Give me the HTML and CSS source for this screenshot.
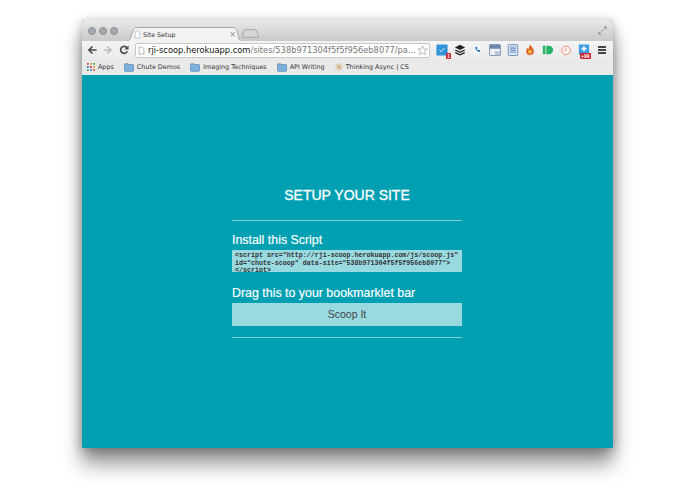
FILE: index.html
```html
<!DOCTYPE html>
<html lang="en">
<head>
<meta charset="utf-8">
<title>Site Setup</title>
<link rel="stylesheet" href="styles.css">
</head>
<body>
<div class="window">
  <div class="titlebar">
    <div class="lights"><i></i><i></i><i></i></div>
    <div class="tab">
      <svg class="tabshape" viewBox="0 0 116 14" preserveAspectRatio="none"><path d="M.5 14C3 14 4 13 5 10L7 3C8 1 9 .5 11 .5H107C109 .5 110 1 111 3L112.500 10C113 13 114 14 115.500 14" fill="#f2f2f2" stroke="#a8a8a8"/></svg>
      <svg class="page" viewBox="0 0 10 11"><path d="M1.500.5h4.500l2.500 2.500v7.500h-7z" fill="#fff" stroke="#a5b4c4"/></svg>
      <span class="tabtitle">Site Setup</span>
      <span class="tabclose">×</span>
    </div>
    <svg class="newtab" viewBox="0 0 18 9"><path d="M.5 8.500L1.500 1.500Q1.700.5 3 .5H14Q15.300.5 15.500 1.500L17.500 8.500z" fill="#d6d6d6" stroke="#a5a5a5"/></svg>
    <svg class="fullscreen" viewBox="0 0 10 10"><path d="M6 .5h3.500V4zM.5 6v3.500H4z" fill="#8a8a8a"/><path d="M3 7l4-4" stroke="#a0a0a0"/></svg>
  </div>
  <div class="toolbar">
    <svg class="nav" viewBox="0 0 12 12"><path d="M11.500 6H3M6.500 1.800L2.300 6l4.200 4.200" fill="none" stroke="#4a4a4a" stroke-width="2"/></svg>
    <svg class="nav" viewBox="0 0 12 12"><path d="M1 6h8M5.500 2l4 4-4 4" fill="none" stroke="#bdbdbd" stroke-width="2"/></svg>
    <svg class="nav" viewBox="0 0 12 12"><path d="M10 7.500A4.200 4.200 0 1 1 9.300 3" fill="none" stroke="#4a4a4a" stroke-width="2"/><path d="M11.500 .5v5H6.500z" fill="#4a4a4a"/></svg>
    <div class="omnibox">
      <svg class="page" viewBox="0 0 10 11"><path d="M1.500.5h4.500l2.500 2.500v7.500h-7z" fill="#fff" stroke="#9a9a9a"/></svg>
      <span class="url"><b>rji-scoop.herokuapp.com</b>/sites/538b971304f5f5f956eb8077/pa...</span>
      <svg class="star" viewBox="0 0 14 14"><path d="M7 1l1.800 4h4.200l-3.300 2.900 1.100 4.400L7 10l-3.800 2.300 1.100-4.400L1 5h4.200z" fill="#fff" stroke="#a8a8a8"/></svg>
    </div>
    <div class="extensions">
      <span class="ext"><svg viewBox="0 0 14 14"><rect x=".5" y=".5" width="13" height="13" rx="1" fill="#2f94dc"/><path d="M4 7l2 2 4-4.500" fill="none" stroke="#fff"/></svg><em class="badge one">1</em></span>
      <span class="ext"><svg viewBox="0 0 14 14"><path d="M7 1l6 3-6 3-6-3z" fill="#222"/><path d="M1.500 7L7 9.700 12.500 7M1.500 10L7 12.700 12.500 10" fill="none" stroke="#222" stroke-width="1.500"/></svg></span>
      <span class="ext"><svg viewBox="0 0 14 14"><circle cx="7" cy="7" r="5.500" fill="#f6f8fb"/><path d="M5 3.500c0 3.500 2 5.500 5.500 6l.5-2-2.200-.8-.7.700c-.7-.4-1.100-1-1.300-1.800l.8-.6L6.800 3z" fill="#2a6fb5"/></svg></span>
      <span class="ext"><svg viewBox="0 0 14 14"><rect x=".5" y=".5" width="13" height="13" rx="1" fill="#eef1f6" stroke="#6d86a9"/><path d="M1 1h12v4.500H1z" fill="#6d86a9"/><path d="M7 13V8.500h6V13z" fill="#b9c6d8"/></svg></span>
      <span class="ext"><svg viewBox="0 0 14 14"><rect x="1.500" y=".5" width="11" height="13" rx="1" fill="#dce6f4" stroke="#5b83bb"/><path d="M3.500 3.500h7M3.500 5.500h7M3.500 7.500h7M3.500 9.500h7" stroke="#5b83bb"/></svg></span>
      <span class="ext"><svg viewBox="0 0 14 14"><path d="M7 .5c1 2 4.500 4 4.500 8a4.500 4.500 0 0 1-9 0c0-2 1-3 1.500-4 .5 1 1 1.300 1.500 1.300C6 4 6 2 7 .5z" fill="#e2622a"/><circle cx="7" cy="9" r="2.200" fill="#f6c04a"/></svg></span>
      <span class="ext"><svg viewBox="0 0 14 14"><path d="M1 2h3v10H1zM5 2h3a5 5 0 0 1 0 10H5z" fill="#25b36a"/></svg></span>
      <span class="ext"><svg viewBox="0 0 14 14"><circle cx="7" cy="7.500" r="5" fill="#fdf4ef" stroke="#ee8a68" stroke-width="1.100"/><path d="M7 5v2.700H5" fill="none" stroke="#ee8a68"/></svg></span>
      <span class="ext"><svg viewBox="0 0 14 14"><rect x="1" y=".5" width="12" height="12" rx="1" fill="#3b9be3"/><path d="M7 2.500v6M4 5.500h6" stroke="#fff" stroke-width="2"/></svg><em class="badge wide">+99</em></span>
    </div>
    <div class="menu"><i></i><i></i><i></i></div>
  </div>
  <div class="bookmarks">
    <span class="mark"><svg class="grid" viewBox="0 0 9 9"><path d="M0 0h2v2H0z" fill="#d8413a"/><path d="M3.500 0h2v2h-2z" fill="#e6a532"/><path d="M7 0h2v2H7z" fill="#4aa04f"/><path d="M0 3.500h2v2H0z" fill="#3d7fd6"/><path d="M3.500 3.500h2v2h-2z" fill="#d8413a"/><path d="M7 3.500h2v2H7z" fill="#e6a532"/><path d="M0 7h2v2H0z" fill="#4aa04f"/><path d="M3.500 7h2v2h-2z" fill="#3d7fd6"/><path d="M7 7h2v2H7z" fill="#d8413a"/></svg>Apps</span>
    <span class="mark"><svg class="folder" viewBox="0 0 12 10"><path d="M.5 1.500q0-1 1-1h3l1 1h5q1 0 1 1v6q0 1-1 1h-9q-1 0-1-1z" fill="#7db2de" stroke="#5d8db8"/></svg>Chute Demos</span>
    <span class="mark"><svg class="folder" viewBox="0 0 12 10"><path d="M.5 1.500q0-1 1-1h3l1 1h5q1 0 1 1v6q0 1-1 1h-9q-1 0-1-1z" fill="#7db2de" stroke="#5d8db8"/></svg>Imaging Techniques</span>
    <span class="mark"><svg class="folder" viewBox="0 0 12 10"><path d="M.5 1.500q0-1 1-1h3l1 1h5q1 0 1 1v6q0 1-1 1h-9q-1 0-1-1z" fill="#7db2de" stroke="#5d8db8"/></svg>API Writing</span>
    <span class="mark"><svg class="sun" viewBox="0 0 10 10"><path d="M5 0v10M0 5h10M1.500 1.500l7 7M8.500 1.500l-7 7" stroke="#c9a66b"/></svg>Thinking Async | CS</span>
  </div>
  <main class="content">
    <div class="panel">
      <h1 class="heading">SETUP YOUR SITE</h1>
      <hr class="rule">
      <h2 class="label first">Install this Script</h2>
      <pre class="code">&lt;script src="http://rji-scoop.herokuapp.com/js/scoop.js"
id="chute-scoop" data-site="538b971304f5f5f956eb8077"&gt;
&lt;/script&gt;</pre>
      <h2 class="label">Drag this to your bookmarklet bar</h2>
      <a class="button">Scoop It</a>
      <hr class="rule end">
    </div>
  </main>
</div>
</body>
</html>
```
FILE: styles.css
```css
* { box-sizing: border-box; }
html, body { margin: 0; height: 100%; background: #fff; overflow: hidden; }
body { padding: 20px 82px 0 82px; font-family: "Liberation Sans", Arial, sans-serif; }
.window {
  width: 531px; height: 428px; display: flex; flex-direction: column;
  border-radius: 4px 4px 0 0;
  box-shadow: 0 16px 20px rgba(0,0,0,.42), 0 2px 12px rgba(0,0,0,.3);
  background: #00a0b2;
}
.titlebar {
  height: 21px; display: flex; align-items: flex-end; padding-left: 6px;
  background: linear-gradient(#e9e9e9, #c9c9c9);
  border-radius: 4px 4px 0 0; flex: none;
}
.lights { display: flex; gap: 3px; align-self: flex-start; margin-top: 7px; width: 38px; flex: none; }
.lights i { width: 8px; height: 8px; border-radius: 50%; background: #a4a9b0; border: 1px solid #8b8f95; }
.tab {
  position: relative; width: 116px; height: 14px; display: flex; align-items: center; padding: 0 6px 0 8px;
  font: 6.300px "DejaVu Sans", sans-serif; color: #333; flex: none;
}
.tabshape { position: absolute; left: 0; top: 0; width: 100%; height: 100%; }
.page { position: relative; width: 7px; height: 9px; flex: none; }
.tabtitle { position: relative; margin-left: 2px; flex: 1; }
.tabclose { position: relative; color: #8a8a8a; font-size: 8px; }
.newtab { width: 17px; height: 9px; margin: 0 0 3px 0; flex: none; }
.fullscreen { width: 9px; height: 9px; margin-left: auto; margin-right: 6px; align-self: flex-start; margin-top: 6px; flex: none; }
.toolbar {
  height: 18px; background: linear-gradient(#f3f3f3, #ebebeb); display: flex; align-items: center;
  padding-left: 5px; flex: none;
}
.nav { width: 10px; height: 10px; margin-right: 6px; flex: none; }
.omnibox {
  width: 295px; height: 15px; background: #fff; border: 1px solid #c8c8c8; border-radius: 2px;
  display: flex; align-items: center; padding: 0 1px 0 2px; flex: none;
}
.url { font: 8.300px "DejaVu Sans", sans-serif; color: #777; margin-left: 3px; white-space: nowrap; flex: 1; min-width: 0; }
.url b { font-weight: 400; color: #111; }
.star { width: 11px; height: 11px; flex: none; }
.extensions { display: flex; margin-left: 6px; gap: 5.700px; }
.ext { position: relative; width: 12px; height: 12px; display: block; }
.ext svg { width: 12px; height: 12px; display: block; }
.badge { position: absolute; right: -3px; bottom: -3px; background: #c8222a; color: #fff; font: 700 5px/6px "Liberation Sans", sans-serif; padding: 0 1px; border-radius: 1px; }
.badge.wide { right: -1px; }
.menu { display: flex; flex-direction: column; gap: 1.500px; width: 8px; margin-left: 8px; }
.menu i { height: 1.500px; background: #444; display: block; }
.bookmarks {
  height: 16px; background: #e9e9e9; display: flex; align-items: center; gap: 10px; padding-left: 5px;
  font: 6.400px "DejaVu Sans", sans-serif; color: #333; flex: none; white-space: nowrap; overflow: hidden;
}
.mark { display: flex; align-items: center; gap: 3px; }
.grid { width: 8px; height: 8px; }
.folder { width: 10px; height: 9px; }
.sun { width: 8px; height: 8px; }
.content { flex: 1; display: flex; justify-content: center; color: #fff; }
.panel { width: 230px; padding-top: 111px; margin-left: -1px; }
.heading { margin: 0 0 16px; font-size: 14px; line-height: 18px; font-weight: 400; text-align: center; -webkit-text-stroke: .3px #fff; }
.rule { margin: 0; border: 0; height: 1px; background: #7fd0d9; }
.label { margin: 0 0 3px; font-size: 12.400px; line-height: 14px; font-weight: 400; -webkit-text-stroke: .15px #fff; }
.label.first { margin-top: 12px; }
.code {
  margin: 0 0 14px; height: 22px; overflow: hidden; padding: 2px 2px 0 3px; background: #99d9e0; color: #333;
  font: 700 6.650px/7.700px "Liberation Mono", monospace;
}
.button { display: block; height: 23px; background: #99d9e0; color: #444; text-align: center; font-size: 10.500px; line-height: 23px; }
.end { margin-top: 11px; }
```
